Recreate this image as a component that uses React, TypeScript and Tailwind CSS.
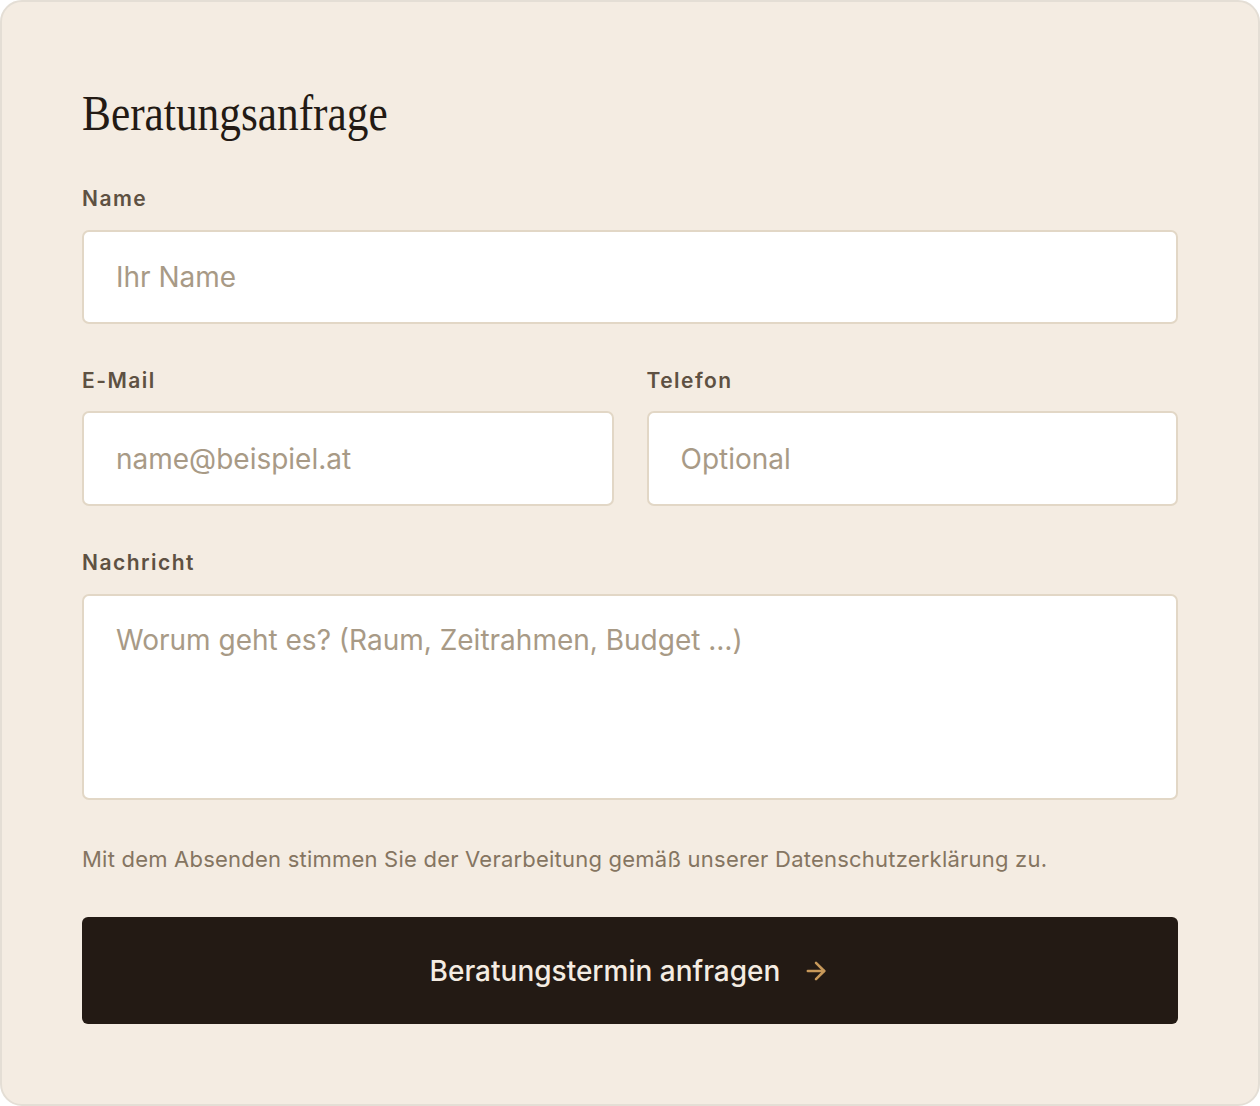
import React from 'react';
import { ArrowRight } from 'lucide-react';

const sans = { fontFamily: 'Inter, "Noto Sans", sans-serif' };

const App: React.FC = () => {
  return (
    <div className="min-h-screen bg-white" style={sans}>
      <form
        onSubmit={(e) => e.preventDefault()}
        className="w-[1260px] h-[1106px] bg-[#f4ece2] border-2 border-[#e4ded5] rounded-[22px] px-[80px] pt-[80px] pb-[80px] flex flex-col"
      >
        <h2
          className="text-[51px] leading-[62px] text-[#231a14] mb-[43px] origin-left scale-x-[0.85] whitespace-nowrap"
          style={{ fontFamily: '"Liberation Serif", serif' }}
        >
          Beratungsanfrage
        </h2>

        <label className="text-[21px] leading-[24px] font-semibold text-[#5e5142] tracking-[0.07em] mb-[19px]">Name</label>
        <input
          type="text"
          placeholder="Ihr Name"
          className="h-[94px] bg-white border-2 border-[#e2d7c6] rounded-[7px] px-[32px] text-[28px] text-[#231a14] placeholder-[#a89a86] outline-none"
        />

        <div className="grid grid-cols-2 gap-[33px] mt-[45px]">
          <div className="flex flex-col">
            <label className="text-[21px] leading-[24px] font-semibold text-[#5e5142] tracking-[0.07em] mb-[18px]">E-Mail</label>
            <input
              type="email"
              placeholder="name@beispiel.at"
              className="h-[95px] bg-white border-2 border-[#e2d7c6] rounded-[7px] px-[32px] text-[28px] text-[#231a14] placeholder-[#a89a86] outline-none"
            />
          </div>
          <div className="flex flex-col">
            <label className="text-[21px] leading-[24px] font-semibold text-[#5e5142] tracking-[0.07em] mb-[18px]">Telefon</label>
            <input
              type="tel"
              placeholder="Optional"
              className="h-[95px] bg-white border-2 border-[#e2d7c6] rounded-[7px] px-[32px] text-[28px] text-[#231a14] placeholder-[#a89a86] outline-none"
            />
          </div>
        </div>

        <label className="text-[21px] leading-[24px] font-semibold text-[#5e5142] tracking-[0.07em] mt-[45px] mb-[19px]">Nachricht</label>
        <textarea
          placeholder="Worum geht es? (Raum, Zeitrahmen, Budget …)"
          className="h-[206px] resize-none bg-white border-2 border-[#e2d7c6] rounded-[7px] px-[32px] py-[26px] text-[28px] leading-[36px] text-[#231a14] placeholder-[#a89a86] outline-none"
        />

        <p className="text-[22px] leading-[30px] tracking-[0.01em] text-[#857561] mt-[44px]">
          Mit dem Absenden stimmen Sie der Verarbeitung gemäß unserer Datenschutzerklärung zu.
        </p>

        <button
          type="submit"
          className="mt-[43px] h-[107px] bg-[#231a14] rounded-[6px] flex items-center justify-center gap-[22px] text-[28px] font-medium text-[#f4ece2]"
        >
          Beratungstermin anfragen
          <ArrowRight className="w-[28px] h-[28px] text-[#c8995a]" strokeWidth={2.2} />
        </button>
      </form>
    </div>
  );
};

export default App;
